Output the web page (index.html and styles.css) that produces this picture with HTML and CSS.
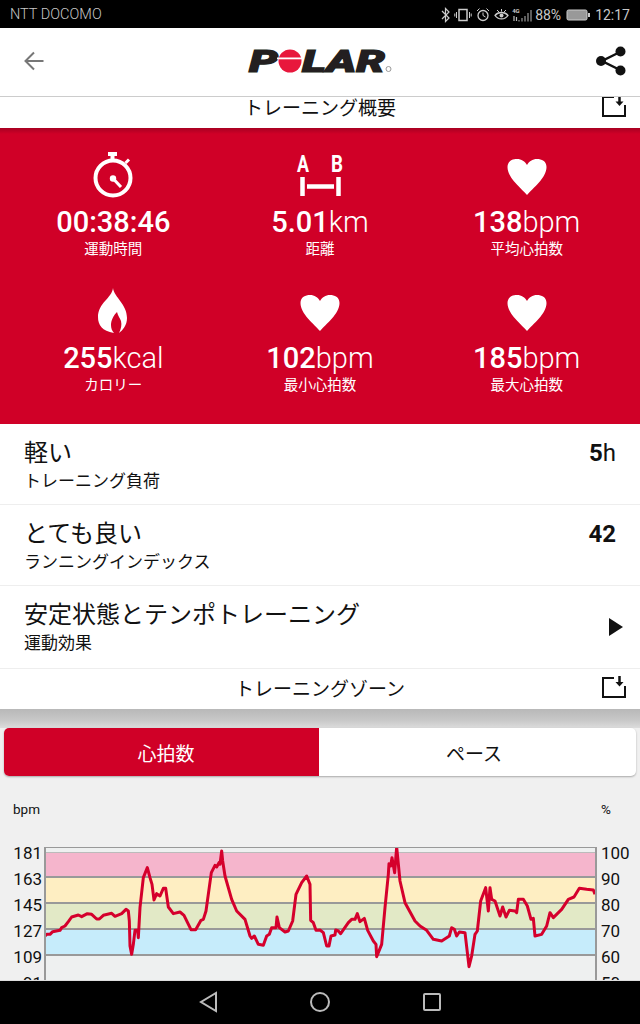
FILE: index.html
```html
<!DOCTYPE html>
<html lang="ja">
<head>
<meta charset="utf-8">
<title>Polar</title>
<link rel="stylesheet" href="styles.css">
</head>
<body>
<div class="phone">
  <div class="status">
    <span class="carrier">NTT DOCOMO</span>
    <div class="status-right">
      <svg class="si" width="9" height="16" viewBox="0 0 9 16"><path d="M1 4l7 7-3.500 3.500V1.500L8 5 1 12" fill="none" stroke="#ccc" stroke-width="1.200"/></svg>
      <svg class="si" width="18" height="16" viewBox="0 0 18 16"><rect x="5" y="2.500" width="8" height="11" fill="none" stroke="#ccc" stroke-width="1.500"/><path d="M2.500 5v6M.8 6.500v3M15.500 5v6M17.200 6.500v3" stroke="#ccc"/></svg>
      <svg class="si" width="14" height="16" viewBox="0 0 14 16"><circle cx="7" cy="8.500" r="5" fill="none" stroke="#ccc" stroke-width="1.300"/><path d="M7 5.500v3l2.500 1.500M1 4l2.500-2.500M13 4l-2.500-2.500" fill="none" stroke="#ccc"/></svg>
      <svg class="si si-eye" width="15" height="16" viewBox="0 0 15 16"><path d="M1 8.500C4 4.500 11 4.500 14 8.500 11 13 4 13 1 8.500z" fill="none" stroke="#ccc" stroke-width="1.300"/><circle cx="7.500" cy="8.500" r="2" fill="#ccc"/><path d="M3 3l2 2M7.500 2v2.500M12 3l-2 2" stroke="#ccc"/></svg>
      <svg class="si si-sig" width="21" height="16" viewBox="0 0 21 16"><path d="M7 13v1.500M10 11v3.500M13 9v5.500M16 6v8.500M19 3v11.500" stroke="#999" stroke-width="1.200"/><path d="M2 9v5M4.500 10v4" stroke="#bbb" stroke-width="1.200"/></svg>
      <span class="mini4g">4G</span>
      <span class="st">88%</span>
      <svg class="si batt" width="24" height="16" viewBox="0 0 24 16"><rect x="1" y="3" width="20" height="10" rx="1.500" fill="#999" stroke="#ccc"/><rect x="22" y="6" width="2" height="4" fill="#ccc"/></svg>
      <span class="st time">12:17</span>
    </div>
  </div>

  <header class="topbar">
    <svg width="20" height="20" viewBox="0 0 20 20"><path d="M19.500 10H2M10 1.500L1.500 10l8.500 8.500" fill="none" stroke="#777" stroke-width="2"/></svg>
    <svg class="logo" width="143" height="24" viewBox="0 0 143 24" role="img" aria-label="POLAR">
      <text class="logo-t" x="0" y="23" textLength="29" lengthAdjust="spacingAndGlyphs">P</text>
      <circle cx="41" cy="12" r="11.500" fill="#e8173c"/>
      <rect x="28" y="8.500" width="26" height="1.800" fill="#fff"/>
      <text class="logo-t" x="53" y="23" textLength="83" lengthAdjust="spacingAndGlyphs">LAR</text>
      <circle cx="139.500" cy="20" r="2.500" fill="none" stroke="#999"/>
    </svg>
    <svg width="30" height="30" viewBox="0 0 30 30"><path d="M24 6L6 15l18 9" fill="none" stroke="#111" stroke-width="2.500"/><circle cx="24.500" cy="5.500" r="5" fill="#111"/><circle cx="5" cy="15" r="5" fill="#111"/><circle cx="24.500" cy="24.500" r="5" fill="#111"/></svg>
  </header>

  <main class="content">
    <section class="bar bar-clipped">
      <h2>トレーニング概要</h2>
      <svg class="dl" width="24" height="21" viewBox="0 0 24 21"><path d="M12 1H1v19h22V9" fill="none" stroke="#111" stroke-width="2"/><path d="M17.500 0v6" stroke="#111" stroke-width="2.500"/><path d="M13.500 5.500h8l-4 4.500z" fill="#111"/></svg>
    </section>

    <section class="stats">
      <div class="stat">
        <svg class="ico" width="40" height="46" viewBox="0 0 40 46"><rect x="15" y="0" width="9" height="4" fill="#fff"/><rect x="17.500" y="2" width="4" height="5" fill="#fff"/><path d="M32.500 11l3.500-3.500" stroke="#fff" stroke-width="3"/><circle cx="20" cy="26" r="17.500" fill="none" stroke="#fff" stroke-width="4"/><circle cx="20" cy="26.500" r="3.200" fill="#fff"/><path d="M20.500 27l7.500 8" stroke="#fff" stroke-width="3"/></svg>
        <div class="val"><b>00:38:46</b></div>
        <div class="lbl">運動時間</div>
      </div>
      <div class="stat">
        <svg class="ico" width="46" height="46" viewBox="0 0 46 46"><text class="ab" x="0" y="20" textLength="12" lengthAdjust="spacingAndGlyphs">A</text><text class="ab" x="34" y="20" textLength="12" lengthAdjust="spacingAndGlyphs">B</text><path d="M5.500 25v19M41.500 25v19" stroke="#fff" stroke-width="4.500"/><path d="M10 34.500h27" stroke="#fff" stroke-width="4.500"/></svg>
        <div class="val"><b>5.01</b>km</div>
        <div class="lbl">距離</div>
      </div>
      <div class="stat">
        <svg class="ico" width="40" height="46" viewBox="0 0 40 46"><path class="heart" d="M20 43C14 36 .5 26 .5 15 .500 9 5.500 7 10 7c4.500 0 8 2.500 10 6 2-3.500 5.500-6 10-6 4.500 0 9.500 2 9.500 8 0 11-13.500 21-19.500 28z"/></svg>
        <div class="val"><b>138</b>bpm</div>
        <div class="lbl">平均心拍数</div>
      </div>
      <div class="stat">
        <svg class="ico" width="40" height="46" viewBox="0 0 40 46"><path d="M20 0c1 9 14 16 14 30 0 7-4 12-8 15 2-4 3-8 2-12-1-3-3-5-4-9-3 3-6 8-6 13 0 3 1 6 3 8C9 43 5 37 5 29 5 15 19 10 20 0z" fill="#fff"/></svg>
        <div class="val"><b>255</b>kcal</div>
        <div class="lbl">カロリー</div>
      </div>
      <div class="stat">
        <svg class="ico" width="40" height="46" viewBox="0 0 40 46"><path class="heart" d="M20 43C14 36 .5 26 .5 15 .500 9 5.500 7 10 7c4.500 0 8 2.500 10 6 2-3.500 5.500-6 10-6 4.500 0 9.500 2 9.500 8 0 11-13.500 21-19.500 28z"/></svg>
        <div class="val"><b>102</b>bpm</div>
        <div class="lbl">最小心拍数</div>
      </div>
      <div class="stat">
        <svg class="ico" width="40" height="46" viewBox="0 0 40 46"><path class="heart" d="M20 43C14 36 .5 26 .5 15 .500 9 5.500 7 10 7c4.500 0 8 2.500 10 6 2-3.500 5.500-6 10-6 4.500 0 9.500 2 9.500 8 0 11-13.500 21-19.500 28z"/></svg>
        <div class="val"><b>185</b>bpm</div>
        <div class="lbl">最大心拍数</div>
      </div>
    </section>

    <section class="rows">
      <div class="row">
        <div><div class="r-title">軽い</div><div class="r-sub">トレーニング負荷</div></div>
        <div class="r-val"><b>5</b>h</div>
      </div>
      <div class="row">
        <div><div class="r-title">とても良い</div><div class="r-sub">ランニングインデックス</div></div>
        <div class="r-val"><b>42</b></div>
      </div>
      <div class="row row-last">
        <div><div class="r-title">安定状態とテンポトレーニング</div><div class="r-sub">運動効果</div></div>
        <svg width="14" height="18" viewBox="0 0 14 18"><path d="M0 0l14 9-14 9z" fill="#111"/></svg>
      </div>
    </section>

    <section class="bar bar-full">
      <h2>トレーニングゾーン</h2>
      <svg class="dl" width="24" height="22" viewBox="0 0 24 22"><path d="M12 2H1v19h22V10" fill="none" stroke="#111" stroke-width="2"/><path d="M17.500 0v7" stroke="#111" stroke-width="2.500"/><path d="M13.500 6h8l-4 4.500z" fill="#111"/></svg>
    </section>
    <div class="under">
      <div class="shade"></div>
      <div class="seg">
        <div class="seg-a">心拍数</div>
        <div class="seg-b">ペース</div>
      </div>
      <div class="units"><span>bpm</span><span class="pct">%</span></div>
      <div class="chart">
        <div class="axis axis-l"><span>181</span><span>163</span><span>145</span><span>127</span><span>109</span><span>91</span></div>
        <div class="plot">
          <div class="band b1"></div>
          <div class="band b2"></div>
          <div class="band b3"></div>
          <div class="band b4"></div>
          <svg class="trace" width="550" height="136" viewBox="135 48 1650 408"><polyline fill="none" stroke="#d5002c" stroke-width="9" stroke-linejoin="round" points="135,315 140,310 150,310 158,302 180,298 185,290 195,285 205,272 215,258 235,252 245,257 262,248 275,250 290,264 298,264 310,253 335,247 345,256 365,248 378,235 385,240 388,270 390,345 395,370 400,340 405,298 413,298 415,320 420,230 430,140 442,110 450,140 456,160 462,207 470,188 480,195 490,172 497,172 505,228 520,248 540,243 552,253 573,296 587,296 603,268 610,265 618,240 634,125 645,103 650,108 657,95 660,100 665,60 668,90 675,135 695,205 710,240 735,265 750,315 755,322 763,315 775,340 790,343 800,315 808,310 815,290 828,290 831,258 838,290 855,303 865,300 878,270 888,190 905,155 920,135 930,160 932,268 940,275 948,298 960,297 970,305 980,345 987,345 993,315 1005,312 1007,297 1015,300 1022,308 1045,275 1055,265 1065,265 1072,248 1080,272 1093,262 1103,298 1120,330 1128,340 1130,377 1145,340 1155,230 1165,130 1167,98 1172,105 1176,80 1184,125 1190,48 1200,150 1215,215 1245,270 1260,285 1280,298 1300,325 1325,330 1348,315 1355,290 1363,295 1370,315 1378,303 1395,305 1407,407 1415,375 1425,310 1432,300 1442,210 1457,170 1465,240 1470,170 1475,205 1485,210 1500,255 1508,228 1518,258 1528,238 1545,240 1550,245 1555,205 1570,205 1582,225 1593,265 1600,262 1605,315 1625,310 1640,285 1650,245 1660,260 1685,235 1705,205 1722,198 1738,172 1760,175 1780,177 1785,190"/></svg>
        </div>
        <div class="axis axis-r"><span>100</span><span>90</span><span>80</span><span>70</span><span>60</span><span>50</span></div>
      </div>
    </div>
  </main>

  <nav class="navbar">
    <svg width="20" height="22" viewBox="0 0 20 22"><path d="M17 2v18L2 11z" fill="none" stroke="#bbb" stroke-width="2"/></svg>
    <svg width="20" height="20" viewBox="0 0 20 20"><circle cx="10" cy="10" r="9" fill="none" stroke="#bbb" stroke-width="2"/></svg>
    <svg class="nav-sq" width="18" height="18" viewBox="0 0 18 18"><rect x="1" y="1" width="16" height="16" rx="1" fill="none" stroke="#bbb" stroke-width="2"/></svg>
  </nav>
</div>
</body>
</html>
```

FILE: styles.css
```css
* { box-sizing: border-box; margin: 0; padding: 0; }
html, body { width: 640px; height: 1024px; overflow: hidden; background: #000; }
body { font-family: Roboto, "Noto Sans CJK JP", sans-serif; color: #111; }
.phone { width: 640px; height: 1024px; display: flex; flex-direction: column; overflow: hidden; }

.status { height: 28px; flex: none; background: #000; color: #c8c8c8; display: flex; align-items: center; justify-content: space-between; padding: 1px 10px 0 10px; font-size: 14.500px; font-weight: 300; }
.status-right { display: flex; align-items: center; position: relative; font-weight: 400; }
.si { display: block; margin-right: 4px; }
.si-eye { margin-right: 3px; }
.si-sig { margin-right: 2px; }
.st { font-size: 14px; }
.batt { margin-left: 5px; margin-right: 5px; }
.mini4g { position: absolute; left: 71px; top: 0; font-size: 6px; font-weight: 700; }

.topbar { height: 69px; flex: none; background: #fff; border-bottom: 1px solid #ccc; display: flex; align-items: center; justify-content: space-between; padding: 0 14px 2px 24px; }
.logo { display: block; margin-left: 1px; overflow: visible; }
.logo-t { font-family: Roboto, sans-serif; font-size: 32px; font-weight: 900; font-style: italic; fill: #231f20; stroke: #231f20; stroke-width: 1.200px; }

.content { flex: 1; min-height: 0; overflow: hidden; background: #f0f0f0; display: flex; flex-direction: column; }

.bar { background: #fff; position: relative; display: flex; justify-content: center; flex: none; overflow: hidden; }
.bar h2 { font-size: 19px; font-weight: 400; line-height: 24px; letter-spacing: 0; white-space: nowrap; }
.bar-clipped { height: 31px; }
.bar-full { height: 41px; padding-top: 9px; border-top: 1px solid #eee; }
.dl { position: absolute; right: 14px; display: block; }
.bar-clipped .dl { top: -1px; }
.bar-full .dl { top: 7px; }

.stats { height: 296px; flex: none; background: #d0002a linear-gradient(#a80022, #d00027 6px); display: grid; grid-template-columns: repeat(3, 1fr); grid-auto-rows: 136px; padding: 24px 10px 0; color: #fff; }
.stat { display: flex; flex-direction: column; align-items: center; }
.ico { display: block; flex: none; overflow: visible; }
.val { font-size: 29px; line-height: 34px; margin-top: 7px; font-weight: 300; white-space: nowrap; }
.val b { font-weight: 500; }
.lbl { font-size: 14.500px; line-height: 20px; margin-top: 1px; white-space: nowrap; }
.ab { font-family: Roboto, sans-serif; font-size: 23px; font-weight: 700; fill: #fff; }
.heart { fill: #fff; }

.rows { background: #fff; flex: none; }
.row { height: 81px; padding: 14px 24px 0; display: flex; justify-content: space-between; border-bottom: 1px solid #eee; }
.row-last { height: 82px; border-bottom: 0; padding-right: 16px; }
.row-last svg { margin-top: 18px; margin-right: 1px; }
.r-title { font-size: 24px; line-height: 30px; }
.r-sub { font-size: 17px; line-height: 26px; }
.r-val { font-size: 24px; line-height: 30px; }
.r-val b { font-weight: 700; }

.under { flex: 1; min-height: 0; background: #f0f0f0; overflow: hidden; }
.shade { height: 19px; background: linear-gradient(#b8b8b8, #c8c8c8 60%, #dcdcdc); }
.seg { height: 48px; margin: 0 4px; display: flex; font-size: 19px; border-radius: 5px; overflow: hidden; box-shadow: 0 1px 2px rgba(0,0,0,.3); background: #fff; }
.seg-a, .seg-b { display: flex; align-items: center; justify-content: center; }
.seg-a { flex: 0 0 315px; padding-left: 9px; background: #d00027; color: #fff; }
.seg-b { flex: 1; padding-right: 7px; }
.units { display: flex; justify-content: space-between; padding: 25px 29px 0 13px; font-size: 13.500px; line-height: 16px; }
.chart { display: grid; grid-template-columns: 45px 552px 43px; margin-top: 30px; }
.axis { display: flex; flex-direction: column; font-size: 17px; line-height: 26px; margin-top: -7px; }
.axis-l { text-align: right; padding-right: 3px; color: #111; }
.axis-r { padding-left: 4px; color: #111; }
.plot { position: relative; height: 135px; padding-top: 4px; background: #eef0f0; border: 2px solid #999; border-bottom: 0; border-top-width: 1.500px; overflow: hidden; margin-left: -1px; }
.band { height: 26px; border-bottom: 2px solid #999; }
.b1 { background: #f5b5cc; border-top: 1px solid #bbb; }
.b2 { background: #feeec2; }
.b3 { background: #e2e9c6; }
.b4 { background: #c6ecfb; }
.trace { position: absolute; left: -1px; top: -1px; display: block; }

.navbar { height: 44px; flex: none; background: #000; border-top: 1px solid #ddd; display: flex; align-items: center; gap: 91px; padding: 0 199px 2px 199px; }
.nav-sq { margin-left: 2px; }
```
